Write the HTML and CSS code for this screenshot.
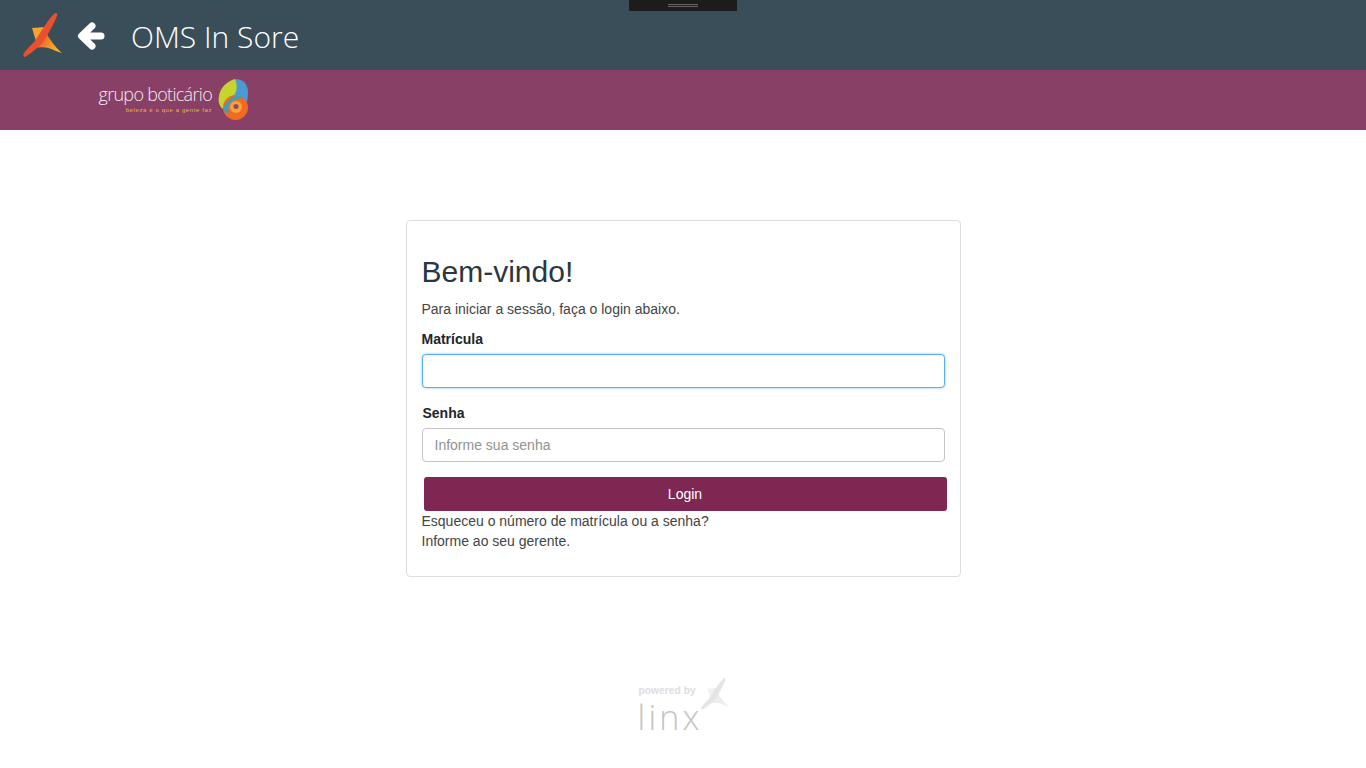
FILE: index.html
```html
<!DOCTYPE html>
<html lang="pt-BR">
<head>
  <meta charset="UTF-8" />
  <title>OMS In Sore</title>
  <link rel="stylesheet" href="styles.css">
</head>
<body>
  <div class="drag-handle"><span></span></div>

  <header class="top-bar">
    <svg class="linx-logo" width="39" height="45" viewBox="0 0 39 45">
      <defs>
        <linearGradient id="blade" x1="0.25" y1="0.5" x2="1" y2="0.85">
          <stop offset="0" stop-color="#ec6a2d" />
          <stop offset="0.35" stop-color="#f0922c" />
          <stop offset="1" stop-color="#f6bf30" />
        </linearGradient>
      </defs>
      <path fill="#f3a52e" d="M9 16 L22 15 L17 24 L13 29 Z" />
      <path fill="url(#blade)" d="M15 26 L22 19 C27 28 33 36 39 41 C35 40 31 38 27 36.500 C22 35 17 35 12 36 Z" />
      <path fill="#e8502f" d="M31 2 C33 0 35 1 34 4 C31 11 27 19 22 27 C18 33 10 40 2 45 C0 45 0 43 1 41 C4 37 8 33 12 29 C17 21 24 9 31 2 Z" />
    </svg>
    <svg class="back-arrow" width="28" height="28" viewBox="0 0 28 28">
      <path d="M24 14 H6 M15 4 L4.500 14 L15 24" fill="none" stroke="#fff" stroke-width="7" stroke-linecap="round" stroke-linejoin="round" />
    </svg>
    <h1 class="app-title">OMS In Sore</h1>
  </header>

  <div class="brand-bar">
    <div class="brand-name">
      <span class="brand-word">grupo boticário</span>
      <span class="brand-tag">beleza é o que a gente faz</span>
    </div>
    <svg class="brand-logo" width="30" height="41" viewBox="0 0 30 41">
      <path fill="#4a9ad4" d="M14 1 C23 -2 30 4 30 13 C30 19 29 24 27 28 L14 18 Z" />
      <path fill="#c5d52e" d="M17 0 C20 7 19 13 15 18 C12 22 8 25 5 30 C1 27 0 22 1 17 C2 9 9 2 17 0 Z" />
      <circle cx="17.500" cy="28.500" r="12.500" fill="#f26a21" />
      <path fill="#3b9fc0" d="M5 29 C8 24 12 19 17 17 C20 16 24 17 26 19 C20 19 14 21 11 26 C10 29 10 32 11 35 C8 34 6 32 5 29 Z" />
      <circle cx="18" cy="28" r="6" fill="#f9a13a" />
      <circle cx="18" cy="27.500" r="2.500" fill="#8c4a5e" />
    </svg>
  </div>

  <main class="content">
    <section class="login-card">
      <h2>Bem-vindo!</h2>
      <p class="intro">Para iniciar a sessão, faça o login abaixo.</p>
      <form>
        <label class="field-label" for="matricula">Matrícula</label>
        <input class="field field-active" id="matricula" type="text">
        <label class="field-label senha-label" for="senha">Senha</label>
        <input class="field" id="senha" type="password" placeholder="Informe sua senha">
        <button class="btn-login" type="button">Login</button>
      </form>
      <p class="help">Esqueceu o número de matrícula ou a senha?<br>Informe ao seu gerente.</p>
    </section>
  </main>

  <footer class="powered">
    <div class="powered-text">
      <span class="powered-by">powered by</span>
      <span class="powered-name">linx</span>
    </div>
    <svg class="powered-logo" width="28" height="33" viewBox="0 0 39 45">
      <path fill="#f0f0f0" d="M9 16 L22 15 L17 24 L13 29 Z" />
      <path fill="#eeeeee" d="M15 26 L22 19 C27 28 33 36 39 41 C35 40 31 38 27 36.500 C22 35 17 35 12 36 Z" />
      <path fill="#e4e4e4" d="M31 2 C33 0 35 1 34 4 C31 11 27 19 22 27 C18 33 10 40 2 45 C0 45 0 43 1 41 C4 37 8 33 12 29 C17 21 24 9 31 2 Z" />
    </svg>
  </footer>
</body>
</html>
```

FILE: styles.css
```css
body {
  margin: 0;
  font-family: "Liberation Sans", Arial, sans-serif;
  font-size: 14px;
  color: #444;
  background: #fff;
  min-height: 100vh;
}

.drag-handle {
  position: absolute;
  top: 0;
  left: 629px;
  width: 108px;
  height: 11px;
  background: #1c1c1c;
}

.drag-handle span {
  display: block;
  width: 30px;
  height: 1px;
  margin: 4px auto 0;
  border-top: 1px solid #666;
  border-bottom: 1px solid #666;
}

.top-bar {
  height: 70px;
  background: #3a4e5a;
  display: flex;
  align-items: center;
  padding-left: 23px;
}

.linx-logo {
  margin-top: -1px;
}

.back-arrow {
  margin-left: 15px;
  margin-top: 2px;
}

.app-title {
  margin: 2px 0 0 26px;
  font-family: "Open Sans", sans-serif;
  font-weight: 300;
  font-size: 30px;
  color: #fff;
}

.brand-bar {
  height: 60px;
  background: #884066;
  display: flex;
  align-items: center;
  padding-left: 99px;
}

.brand-name {
  display: flex;
  flex-direction: column;
  align-items: flex-end;
  width: 113px;
  margin-top: -3px;
}

.brand-word {
  font-family: "Open Sans", sans-serif;
  font-weight: 300;
  font-size: 18px;
  line-height: 22px;
  letter-spacing: -0.7px;
  color: #f4e9ef;
  white-space: nowrap;
}

.brand-tag {
  margin-top: 1px;
  font-size: 6px;
  line-height: 8px;
  letter-spacing: 0.6px;
  color: #ecb53c;
  white-space: nowrap;
}

.brand-logo {
  margin-left: 6px;
  margin-top: -1px;
}

.content {
  display: flex;
  justify-content: center;
  padding-top: 90px;
}

.login-card {
  box-sizing: border-box;
  width: 555px;
  height: 357px;
  border: 1px solid #ddd;
  border-radius: 4px;
  padding: 15px;
}

.login-card h2 {
  margin: 18px 0 0;
  font-size: 30px;
  font-weight: 400;
  line-height: 36px;
  color: #2b3640;
}

.intro {
  margin: 9px 0 0;
  line-height: 20px;
}

.field-label {
  display: block;
  font-weight: 700;
  line-height: 20px;
  color: #212529;
  margin-top: 10px;
}

.senha-label {
  margin-top: 15px;
  margin-left: 1px;
}

.field {
  display: block;
  box-sizing: border-box;
  width: 523px;
  height: 34px;
  margin-top: 5px;
  padding: 0 12px;
  border: 1px solid #c4c4c4;
  border-radius: 4px;
  font: inherit;
  color: #333;
  outline: none;
}

.field::placeholder {
  color: #929292;
}

.field-active {
  border-color: #5cadf0;
  box-shadow: 0 0 3px rgba(92, 173, 240, 0.7);
}

.btn-login {
  display: block;
  width: 523px;
  height: 34px;
  margin: 15px 0 0 2px;
  border: none;
  border-radius: 3px;
  background: #7f2753;
  color: #fff;
  font: inherit;
}

.help {
  margin: 0;
  line-height: 20px;
}

.powered {
  display: flex;
  justify-content: center;
  align-items: flex-start;
  margin-top: 100px;
}

.powered-text {
  display: flex;
  flex-direction: column;
  width: 63px;
}

.powered-by {
  margin: 8px 0 0 1px;
  font-size: 10.3px;
  font-weight: 700;
  line-height: 12px;
  color: #ddd;
  white-space: nowrap;
}

.powered-name {
  margin-top: 5px;
  font-family: "Open Sans", sans-serif;
  font-weight: 300;
  font-size: 34px;
  line-height: 30px;
  letter-spacing: 3.2px;
  color: #c4c4c4;
}
```
